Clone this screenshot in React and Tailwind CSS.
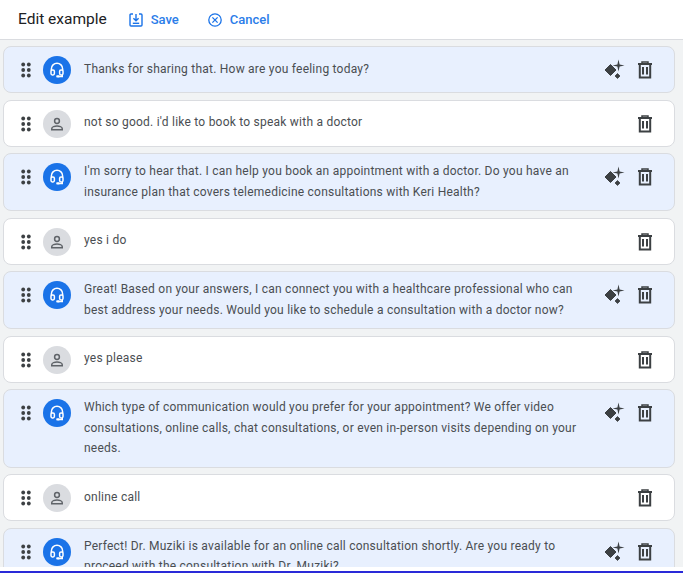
import React from 'react';

const messages = [
  { bot: true, text: 'Thanks for sharing that. How are you feeling today?' },
  { bot: false, text: "not so good. i'd like to book to speak with a doctor" },
  { bot: true, text: "I'm sorry to hear that. I can help you book an appointment with a doctor. Do you have an insurance plan that covers telemedicine consultations with Keri Health?" },
  { bot: false, text: 'yes i do' },
  { bot: true, text: 'Great! Based on your answers, I can connect you with a healthcare professional who can best address your needs. Would you like to schedule a consultation with a doctor now?' },
  { bot: false, text: 'yes please' },
  { bot: true, text: 'Which type of communication would you prefer for your appointment? We offer video consultations, online calls, chat consultations, or even in-person visits depending on your needs.' },
  { bot: false, text: 'online call' },
  { bot: true, text: 'Perfect! Dr. Muziki is available for an online call consultation shortly. Are you ready to proceed with the consultation with Dr. Muziki?' },
];

const DragIcon = () => (
  <svg width="10" height="16" viewBox="0 0 10 16" fill="#3c4043" className="shrink-0">
    <circle cx="2.2" cy="2.5" r="1.9" />
    <circle cx="7.8" cy="2.5" r="1.9" />
    <circle cx="2.2" cy="8" r="1.9" />
    <circle cx="7.8" cy="8" r="1.9" />
    <circle cx="2.2" cy="13.5" r="1.9" />
    <circle cx="7.8" cy="13.5" r="1.9" />
  </svg>
);

const HeadsetIcon = () => (
  <svg width="18" height="18" viewBox="0 0 24 24" fill="none" stroke="#fff" strokeWidth="2">
    <path d="M4.5 13 V10.5 a7.5 7.5 0 0 1 15 0 V13" />
    <rect x="4" y="12" width="4.5" height="6.5" rx="1.8" />
    <rect x="15.5" y="12" width="4.5" height="6.5" rx="1.8" />
    <path d="M19 18.5 V20.5 H14" />
    <rect x="11" y="19" width="4.5" height="3" rx="1" fill="#fff" stroke="none" />
  </svg>
);

const PersonIcon = () => (
  <svg width="18" height="18" viewBox="0 0 24 24" fill="none" stroke="#5f6368" strokeWidth="2">
    <circle cx="12" cy="8" r="3.2" />
    <path d="M5 19.5 v-1.2 c0-2.4 4.2-3.6 7-3.6 s7 1.2 7 3.6 v1.2 z" />
  </svg>
);

const SparkIcon = () => (
  <svg width="22" height="22" viewBox="0 0 22 22" fill="#3c4043" className="shrink-0">
    <path d="M7.5 5.5 L13 11 L7.5 16.5 L2 11 Z" strokeLinejoin="round" stroke="#3c4043" strokeWidth="1" />
    <path d="M15.5 0.5 L16.6 5.4 L21.5 6.5 L16.6 7.6 L15.5 12.5 L14.4 7.6 L9.5 6.5 L14.4 5.4 Z" />
    <path d="M14.5 14.5 L17 17 L14.5 19.5 L12 17 Z" strokeLinejoin="round" stroke="#3c4043" strokeWidth="0.8" />
  </svg>
);

const TrashIcon = () => (
  <svg width="16" height="18" viewBox="0 0 16 18" fill="none" stroke="#3c4043" strokeWidth="2" className="shrink-0">
    <path d="M1 3 H15" />
    <path d="M5 2.5 V1 H11 V2.5" strokeWidth="1.5" />
    <path d="M2.8 3 V16.5 H13.2 V3" />
    <path d="M6 6 V13.5 M10 6 V13.5" />
  </svg>
);

const SaveIcon = () => (
  <svg width="14" height="14" viewBox="0 0 14 14" fill="none" stroke="#1a73e8" strokeWidth="1.4">
    <path d="M4 1 H2 a1 1 0 0 0 -1 1 V12 a1 1 0 0 0 1 1 H12 a1 1 0 0 0 1 -1 V2 a1 1 0 0 0 -1 -1 H10" />
    <path d="M7 1 V7.5 M4.4 5.2 L7 7.8 L9.6 5.2" />
    <path d="M3.8 10.3 H10.2" />
  </svg>
);

const CancelIcon = () => (
  <svg width="14" height="14" viewBox="0 0 14 14" fill="none" stroke="#1a73e8" strokeWidth="1.3">
    <circle cx="7" cy="7" r="6.2" />
    <path d="M4.4 4.4 L9.6 9.6 M9.6 4.4 L4.4 9.6" />
  </svg>
);

const MessageCard = ({ bot, text }) => (
  <div className={`flex items-start shrink-0 min-h-[47px] rounded-lg border border-[#dadce0] pl-[17px] pr-[21px] ${bot ? 'bg-[#e8f0fe]' : 'bg-white'}`}>
    <div className="h-7 mt-[9px] flex items-center">
      <DragIcon />
    </div>
    <div className={`ml-[12px] mt-[9px] w-7 h-7 rounded-full flex items-center justify-center shrink-0 ${bot ? 'bg-[#1a73e8]' : 'bg-[#dadce0]'}`}>
      {bot ? <HeadsetIcon /> : <PersonIcon />}
    </div>
    <p className="ml-[13px] flex-1 self-center text-[12px] leading-[20.5px] tracking-[0.23px] text-[#4a4e52] pt-[7px] pb-[8px] pr-[14px]">{text}</p>
    <div className="h-7 mt-[9px] flex items-center gap-[12px]">
      {bot && <SparkIcon />}
      <TrashIcon />
    </div>
  </div>
);

export default function App() {
  return (
    <div className="h-[573px] w-[683px] overflow-hidden flex flex-col bg-white font-['Roboto',sans-serif] border-b-2 border-[#2a2ad8]">
      <header className="h-10 shrink-0 bg-white border-b border-[#dadce0] flex items-center pl-[18px]">
        <h1 className="text-[15.5px] text-[#202124] font-normal">Edit example</h1>
        <button className="ml-[22px] flex items-center gap-[8px] text-[#2b7de9] text-[13px] font-medium">
          <SaveIcon /> Save
        </button>
        <button className="ml-[29px] flex items-center gap-[8px] text-[#2b7de9] text-[13px] font-medium">
          <CancelIcon /> Cancel
        </button>
      </header>
      <div className="flex-1 min-h-0 overflow-hidden flex flex-col gap-[6.5px] pt-[6px] pl-[3px] pr-[8px] bg-[#f1f3f4]">
        {messages.map((m, i) => (
          <MessageCard key={i} bot={m.bot} text={m.text} />
        ))}
      </div>
      <div className="h-1 shrink-0 bg-white" />
    </div>
  );
}
